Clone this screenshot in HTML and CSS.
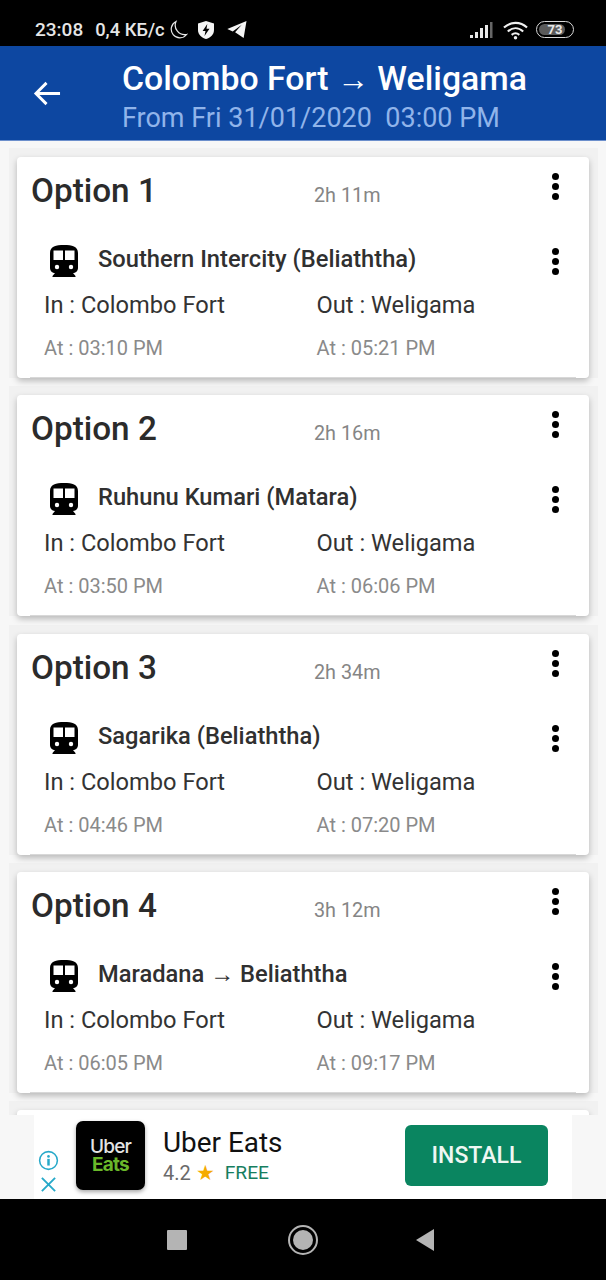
FILE: index.html
```html
<!DOCTYPE html>
<html lang="en">
<head>
<meta charset="utf-8">
<title>Colombo Fort → Weligama</title>
<link rel="stylesheet" href="styles.css">
</head>
<body>
<div class="screen">
  <div class="status">
    <div class="status-left">
      <span class="time">23:08</span>
      <span class="speed">0,4 КБ/с</span>
      <svg class="st-moon" viewBox="0 0 20 20"><path d="M8 1.500A8.600 8.600 0 1 0 18.600 14.500 9.500 9.500 0 0 1 8 1.500Z" fill="none" stroke="#e8e8e8" stroke-width="1.200"/></svg>
      <svg class="st-shield" viewBox="0 0 18 20"><path d="M9 1 17 3.600V10C17 14.500 13.500 17.800 9 19 4.500 17.800 1 14.500 1 10V3.600Z" fill="#f4f4f4"/><path d="M10.300 4 5.600 11H8.500L7.500 16 12.500 8.800H9.500Z" fill="#000"/></svg>
      <svg class="st-send" viewBox="0 0 22 20"><path d="M21 1 0.800 9.500 6.500 12 16 5 9 13 18 19Z" fill="#f4f4f4"/></svg>
    </div>
    <div class="status-right">
      <svg class="st-signal" viewBox="0 0 24 18"><g fill="#e8e8e8"><rect x="0" y="14" width="3" height="3"/><rect x="5" y="11" width="3" height="6"/><rect x="10" y="7" width="3" height="10"/><rect x="15" y="4" width="3" height="13"/></g><rect x="20" y="1" width="2.500" height="16" fill="#666"/></svg>
      <svg class="st-wifi" viewBox="0 0 26 20"><g fill="none" stroke="#f0f0f0" stroke-width="2.200"><path d="M1 7.500C8 1 18 1 25 7.500"/><path d="M5 11.500C10 7 16 7 21 11.500"/><path d="M9 15C11.500 13 14.500 13 17 15"/></g><circle cx="13" cy="18" r="1.800" fill="#f0f0f0"/></svg>
      <div class="battery"><div class="battery-fill"></div><span class="battery-num">73</span></div>
    </div>
  </div>

  <header class="appbar">
    <svg class="back" viewBox="0 0 30 28"><path d="M28 14H3M14 3 3 14 14 25" fill="none" stroke="#fff" stroke-width="3"/></svg>
    <div class="titles">
      <div class="title">Colombo Fort <span class="arrow">→</span> Weligama</div>
      <div class="subtitle">From Fri 31/01/2020&nbsp; 03:00 PM</div>
    </div>
  </header>

  <main class="list">
    <article class="item"><div class="card">
      <div class="card-head"><h2 class="opt">Option 1</h2><span class="dur">2h 11m</span><span class="dots"><i></i><i></i><i></i></span></div>
      <div class="train"><svg class="train-ic" viewBox="0 0 28 32"><path d="M14 0C6 0 0 1.500 0 8V23C0 26 2.500 28 5 28L2.500 31V32H25.500V31L23 28C25.500 28 28 26 28 23V8C28 1.500 22 0 14 0Z" fill="#000"/><g fill="#fff"><rect x="3.500" y="5.500" width="9.500" height="9.500"/><rect x="15" y="5.500" width="9.500" height="9.500"/><circle cx="7" cy="22" r="2.200"/><circle cx="21" cy="22" r="2.200"/></g></svg><span class="train-name">Southern Intercity (Beliaththa)</span><span class="dots"><i></i><i></i><i></i></span></div>
      <div class="stops"><span>In : Colombo Fort</span><span>Out : Weligama</span></div>
      <div class="times"><span>At : 03:10 PM</span><span>At : 05:21 PM</span></div>
    </div></article>

    <article class="item"><div class="card">
      <div class="card-head"><h2 class="opt">Option 2</h2><span class="dur">2h 16m</span><span class="dots"><i></i><i></i><i></i></span></div>
      <div class="train"><svg class="train-ic" viewBox="0 0 28 32"><path d="M14 0C6 0 0 1.500 0 8V23C0 26 2.500 28 5 28L2.500 31V32H25.500V31L23 28C25.500 28 28 26 28 23V8C28 1.500 22 0 14 0Z" fill="#000"/><g fill="#fff"><rect x="3.500" y="5.500" width="9.500" height="9.500"/><rect x="15" y="5.500" width="9.500" height="9.500"/><circle cx="7" cy="22" r="2.200"/><circle cx="21" cy="22" r="2.200"/></g></svg><span class="train-name">Ruhunu Kumari (Matara)</span><span class="dots"><i></i><i></i><i></i></span></div>
      <div class="stops"><span>In : Colombo Fort</span><span>Out : Weligama</span></div>
      <div class="times"><span>At : 03:50 PM</span><span>At : 06:06 PM</span></div>
    </div></article>

    <article class="item"><div class="card">
      <div class="card-head"><h2 class="opt">Option 3</h2><span class="dur">2h 34m</span><span class="dots"><i></i><i></i><i></i></span></div>
      <div class="train"><svg class="train-ic" viewBox="0 0 28 32"><path d="M14 0C6 0 0 1.500 0 8V23C0 26 2.500 28 5 28L2.500 31V32H25.500V31L23 28C25.500 28 28 26 28 23V8C28 1.500 22 0 14 0Z" fill="#000"/><g fill="#fff"><rect x="3.500" y="5.500" width="9.500" height="9.500"/><rect x="15" y="5.500" width="9.500" height="9.500"/><circle cx="7" cy="22" r="2.200"/><circle cx="21" cy="22" r="2.200"/></g></svg><span class="train-name">Sagarika (Beliaththa)</span><span class="dots"><i></i><i></i><i></i></span></div>
      <div class="stops"><span>In : Colombo Fort</span><span>Out : Weligama</span></div>
      <div class="times"><span>At : 04:46 PM</span><span>At : 07:20 PM</span></div>
    </div></article>

    <article class="item"><div class="card">
      <div class="card-head"><h2 class="opt">Option 4</h2><span class="dur">3h 12m</span><span class="dots"><i></i><i></i><i></i></span></div>
      <div class="train"><svg class="train-ic" viewBox="0 0 28 32"><path d="M14 0C6 0 0 1.500 0 8V23C0 26 2.500 28 5 28L2.500 31V32H25.500V31L23 28C25.500 28 28 26 28 23V8C28 1.500 22 0 14 0Z" fill="#000"/><g fill="#fff"><rect x="3.500" y="5.500" width="9.500" height="9.500"/><rect x="15" y="5.500" width="9.500" height="9.500"/><circle cx="7" cy="22" r="2.200"/><circle cx="21" cy="22" r="2.200"/></g></svg><span class="train-name">Maradana <span class="arrow-sm">→</span> Beliaththa</span><span class="dots"><i></i><i></i><i></i></span></div>
      <div class="stops"><span>In : Colombo Fort</span><span>Out : Weligama</span></div>
      <div class="times"><span>At : 06:05 PM</span><span>At : 09:17 PM</span></div>
    </div></article>

    <article class="item"><div class="card"></div></article>
  </main>

  <aside class="ad">
    <div class="ad-ctrl">
      <svg class="ad-info" viewBox="0 0 22 22"><circle cx="11" cy="11" r="9.300" fill="none" stroke="#27a9c9" stroke-width="1.600"/><circle cx="11" cy="6.700" r="1.400" fill="#27a9c9"/><rect x="9.700" y="9.300" width="2.600" height="7" fill="#27a9c9"/></svg>
      <svg class="ad-close" viewBox="0 0 18 18"><path d="M2 2 16 16M16 2 2 16" fill="none" stroke="#27a9c9" stroke-width="2"/></svg>
    </div>
    <div class="ad-logo"><span class="logo-uber">Uber</span><span class="logo-eats">Eats</span></div>
    <div class="ad-text">
      <div class="ad-name">Uber Eats</div>
      <div class="ad-meta"><span class="rating">4.2</span><span class="star">★</span><span class="free">FREE</span></div>
    </div>
    <div class="install">INSTALL</div>
  </aside>

  <nav class="navbar">
    <span class="nav-square"></span>
    <span class="nav-circle"><span class="nav-dot"></span></span>
    <svg class="nav-back" viewBox="0 0 20 24"><path d="M19 1V23L1 12Z" fill="#b4b4b4"/></svg>
  </nav>
</div>
</body>
</html>
```
FILE: styles.css
```css
* { box-sizing: border-box; margin: 0; padding: 0; }
html, body { width: 606px; height: 1280px; overflow: hidden; background: #f7f7f7; }
body { font-family: Roboto, "Liberation Sans", sans-serif; }

.screen { width: 606px; height: 1280px; display: flex; flex-direction: column; overflow: hidden; }

/* status bar */
.status { height: 46px; flex: none; background: #000; color: #e6e6e6; display: flex; justify-content: space-between; align-items: center; padding: 13px 32px 0 35px; }
.status-left, .status-right { display: flex; align-items: center; }
.time { font-size: 19px; font-weight: 500; margin-right: 12px; }
.speed { font-size: 18.300px; font-weight: 500; margin-right: 3px; }
.st-moon { width: 20px; height: 20px; margin-right: 9px; }
.st-shield { width: 18px; height: 20px; margin-right: 11px; }
.st-send { width: 22px; height: 19px; }
.st-signal { width: 24px; height: 18px; margin-right: 9px; }
.st-wifi { width: 25px; height: 20px; margin-right: 8px; }
.battery { position: relative; width: 38px; height: 17px; border: 1.500px solid #d8d8d8; border-radius: 9px; overflow: hidden; display: flex; align-items: center; justify-content: center; }
.battery-fill { position: absolute; left: 2px; top: 2px; bottom: 2px; width: 72%; background: #5a5a5a; border-radius: 6px; }
.battery-num { position: relative; font-size: 13px; font-weight: 700; color: #e8e8e8; }

/* app bar */
.appbar { height: 95px; flex: none; background: #0d47a1; display: flex; align-items: center; padding: 0 0 0 33px; border-bottom: 1px solid #6c8fcc; }
.back { width: 29px; height: 27px; margin-right: 60px; }
.titles { display: flex; flex-direction: column; padding-top: 6px; }
.title { font-size: 33.800px; line-height: 40px; font-weight: 500; color: #fff; }
.arrow { font-weight: 400; font-size: 32px; }
.subtitle { font-size: 27px; line-height: 32px; color: #90b4ea; margin-top: 3px; }

/* list */
.list { flex: 1; min-height: 0; overflow: hidden; padding: 7px 8px 0 9px; background: #f7f7f7; }
.item { height: 238.300px; padding: 9px 9px 0 8px; background: linear-gradient(#f1f1f1, #f1f1f1) no-repeat 0 0 / 100% 230px; }
.card { height: 221px; background: #fff; border-radius: 4px; box-shadow: 0 3px 6px rgba(0,0,0,.25); padding: 0 0 0 14px; position: relative; }
.card::after { content: ""; position: absolute; left: 13px; right: 13px; bottom: 0; height: 1px; background: #d8d8d8; }
.card-head { height: 86px; display: flex; align-items: flex-start; }
.opt { font-size: 33.300px; line-height: 39px; font-weight: 500; color: #2b2b2b; width: 283px; padding-top: 14px; height: 53px; }
.dur { font-size: 19.800px; color: #858585; padding-top: 27px; }
.dots { display: flex; flex-direction: column; gap: 3px; margin-left: auto; margin-right: 30px; padding-top: 16px; }
.dots i { display: block; width: 7px; height: 7px; border-radius: 50%; background: #000; }
.train { height: 48px; display: flex; align-items: flex-start; padding-left: 19px; }
.train-ic { width: 28px; height: 32px; margin-right: 20px; margin-top: 2px; flex: none; }
.train-name { font-size: 23.700px; line-height: 28px; font-weight: 500; color: #303030; padding-top: 2px; }
.train-name .arrow-sm { font-weight: 400; font-size: 24px; }
.train .dots { padding-top: 5px; }
.stops { display: flex; padding-left: 13px; font-size: 23.650px; line-height: 28px; color: #333; }
.stops span, .times span { width: 273px; }
.times { display: flex; padding-left: 13px; margin-top: 15px; font-size: 20px; line-height: 28px; color: #8a8a8a; }

/* ad */
.ad { height: 84px; flex: none; background: #fff; margin: 0 34px; display: flex; align-items: flex-start; }
.ad-ctrl { width: 42px; display: flex; flex-direction: column; align-items: center; padding: 35px 14px 0 0; flex: none; }
.ad-info { width: 21px; height: 21px; flex: none; }
.ad-close { width: 17px; height: 17px; margin-top: 5px; flex: none; }
.ad-logo { width: 69px; height: 69px; flex: none; margin-top: 6px; background: #000; border-radius: 7px; box-shadow: 0 2px 4px rgba(0,0,0,.35); display: flex; flex-direction: column; align-items: center; justify-content: center; font-family: Inter, sans-serif; font-size: 19px; font-weight: 500; letter-spacing: -0.800px; }
.logo-uber, .logo-eats { display: block; height: 18px; line-height: 18px; }
.logo-uber { color: #e4e4e4; }
.logo-eats { color: #6ab82a; font-weight: 700; }
.ad-text { margin-left: 18px; width: 242px; flex: none; padding-top: 12px; }
.ad-name { font-size: 27.900px; line-height: 32px; color: #111; }
.ad-meta { display: flex; align-items: center; font-size: 20px; line-height: 26px; margin-top: 1px; }
.rating { color: #6a6a6a; }
.star { color: #f5ab00; font-size: 21px; margin-left: 5px; margin-right: 10px; }
.free { color: #167e60; font-size: 19.200px; }
.install { width: 143px; height: 61px; margin-top: 10px; background: #0a8560; color: #eef7f3; border-radius: 6px; display: flex; align-items: center; justify-content: center; font-size: 23px; font-weight: 500; flex: none; }

/* nav */
.navbar { height: 81px; flex: none; background: #000; display: flex; align-items: center; padding-left: 167px; }
.nav-square { width: 20px; height: 20px; background: #b4b4b4; border-radius: 1px; margin-right: 101px; }
.nav-circle { width: 30px; height: 30px; border: 2.500px solid #b4b4b4; border-radius: 50%; display: flex; align-items: center; justify-content: center; margin-right: 97px; }
.nav-dot { width: 20px; height: 20px; border-radius: 50%; background: #b4b4b4; }
.nav-back { width: 20px; height: 24px; }
```
